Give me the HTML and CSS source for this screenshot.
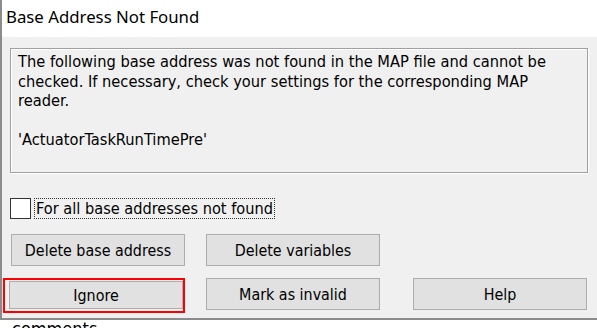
FILE: index.html
```html
<!DOCTYPE html>
<html>
<head>
    <title>Base Address Not Found</title>
    <link rel="stylesheet" href="styles.css">
</head>
<body>
    <div class="window">
        <div class="titlebar">Base Address Not Found</div>

        <div class="content">
            <div class="message">
                The following base address was not found in the MAP file and cannot be<br>
                checked. If necessary, check your settings for the corresponding MAP<br>
                reader.<br><br>
                'ActuatorTaskRunTimePre'
            </div>

            <label class="check-row">
                <span class="checkbox"></span>
                <span class="check-label">For all base addresses not found</span>
            </label>

            <div class="button-grid">
                <button class="col1">Delete base address</button>
                <button class="col2">Delete variables</button>
                <div class="col1 marked">
                    <button class="ignore">Ignore</button>
                </div>
                <button class="col2">Mark as invalid</button>
                <button class="col3">Help</button>
            </div>
        </div>
    </div>

    <div class="below">comments</div>
</body>
</html>
```

FILE: styles.css
```css
body {
    margin: 0;
    background-color: #ffffff;
    font-family: "DejaVu Sans Condensed", "DejaVu Sans", sans-serif;
    color: #000000;
    overflow: hidden;
}

.window {
    border-left: 2px solid #8c8c8c;
    border-bottom: 2px solid #8c8c8c;
    width: 597px;
}

.titlebar {
    height: 37px;
    background-color: #ffffff;
    padding-left: 4px;
    font-family: "Noto Sans", "Open Sans", sans-serif;
    font-size: 16.8px;
    line-height: 34px;
    box-sizing: border-box;
}

.content {
    background-color: #f0f0f0;
    height: 281px;
    padding-top: 11px;
    box-sizing: border-box;
}

.message {
    margin-left: 8px;
    width: 578px;
    height: 125px;
    box-sizing: border-box;
    border: 1px solid #a0a0a0;
    box-shadow: inset 1px 1px 0 #ffffff, 1px 1px 0 #ffffff;
    padding: 3px 7px;
    font-size: 16.3px;
    line-height: 19.5px;
    white-space: nowrap;
}

.check-row {
    display: flex;
    align-items: center;
    margin-top: 24px;
    margin-left: 8px;
    height: 22px;
}

.checkbox {
    width: 19px;
    height: 19px;
    background-color: #ffffff;
    border: 1px solid #333333;
}

.check-label {
    margin-left: 3px;
    padding: 0 1px;
    border: 1px dotted #333333;
    font-size: 16.2px;
    line-height: 19px;
}

.button-grid {
    display: grid;
    grid-template-columns: 174px 174px 174px;
    grid-template-rows: 32px 32px;
    column-gap: 21px;
    row-gap: 12px;
    margin-top: 15px;
    margin-left: 9px;
}

.button-grid .col1 {
    grid-column: 1;
}

.button-grid .col2 {
    grid-column: 2;
}

.button-grid .col3 {
    grid-column: 3;
    margin-left: 12px;
}

.button-grid button {
    height: 32px;
    width: 174px;
    background-color: #e1e1e1;
    border: 1px solid #adadad;
    font-family: "DejaVu Sans Condensed", "DejaVu Sans", sans-serif;
    font-size: 15.9px;
    color: #000000;
    padding: 0;
}

.marked {
    position: relative;
}

.button-grid .ignore {
    height: 28px;
    margin-top: 3px;
    margin-left: -2px;
}

.marked::after {
    content: "";
    position: absolute;
    left: -8px;
    top: 0;
    right: 0;
    bottom: -3px;
    border: 2px solid #ff0000;
}

.below {
    padding-left: 12px;
    font-size: 18px;
    line-height: 18px;
}
```
